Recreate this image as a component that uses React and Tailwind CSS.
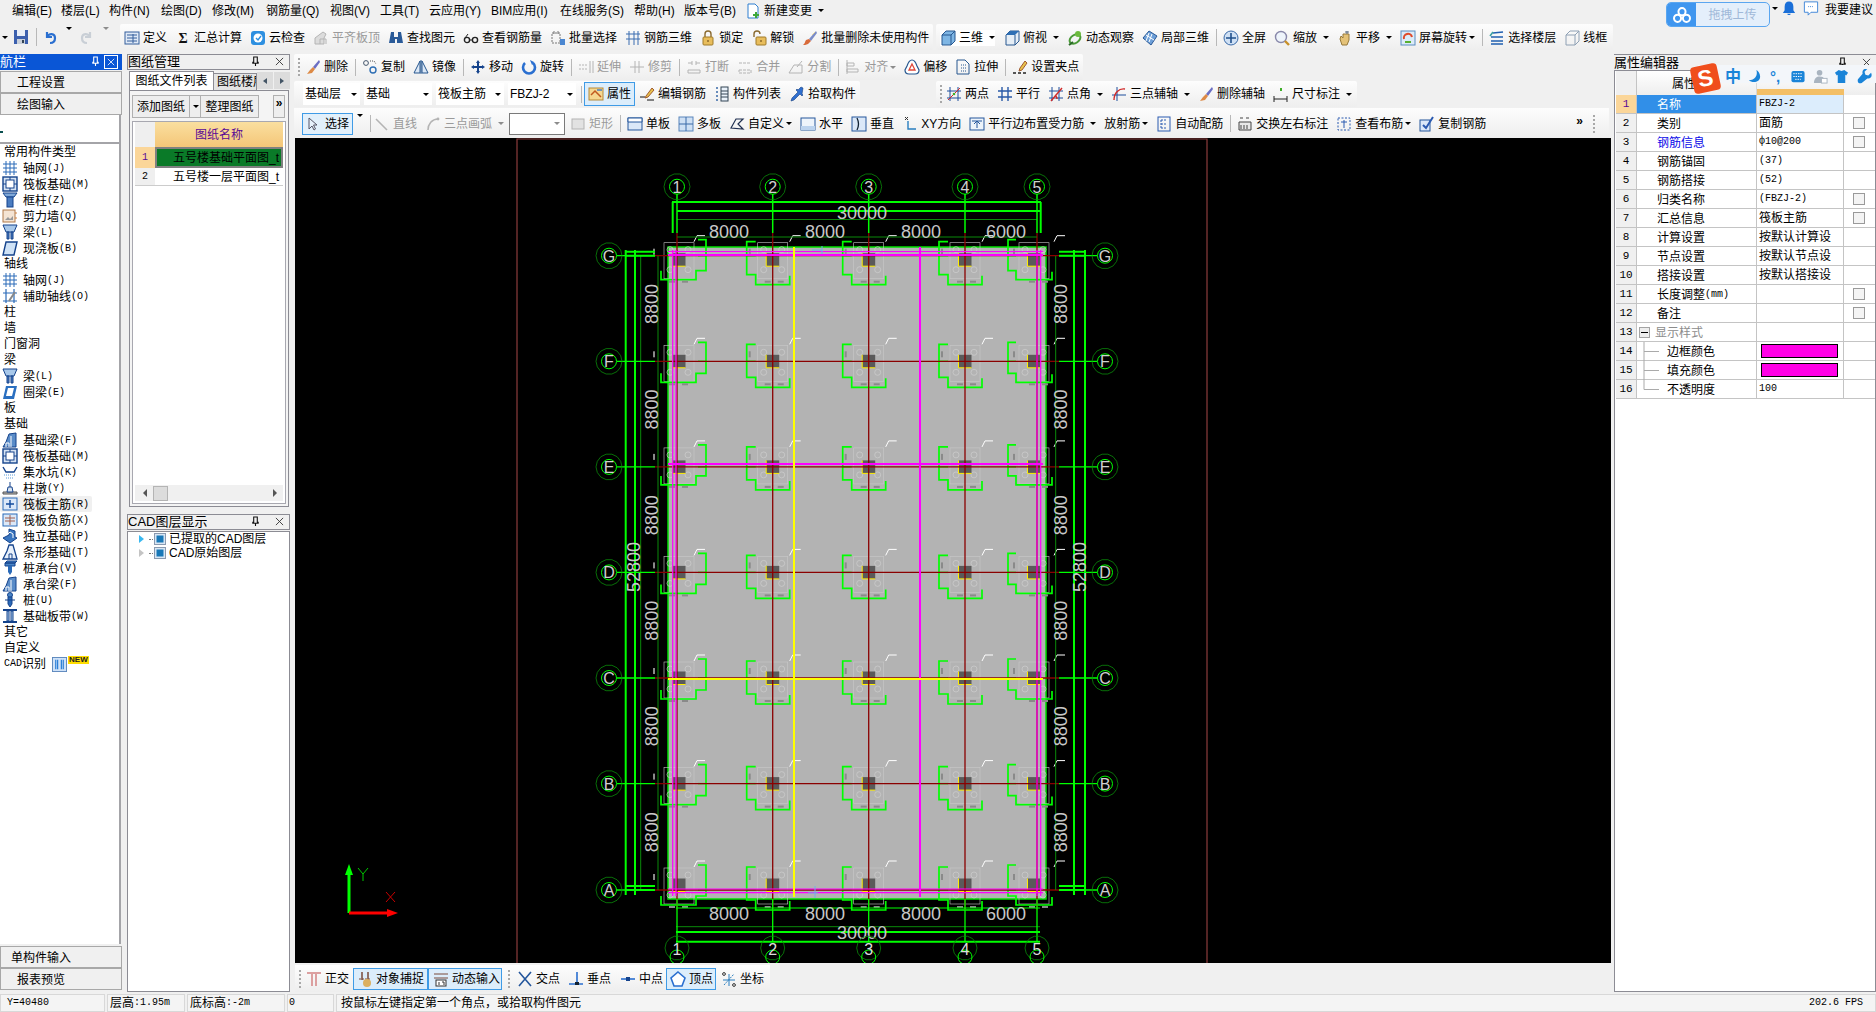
import React from 'react'

const S = ({ children }) => (
  <svg viewBox="0 0 16 16" width="16" height="16" fill="none" className="block shrink-0">{children}</svg>
)

const NAVY = '#15438c'
const GRAY = '#b4b4b4'

const Ic = {
  save: <S><path d="M1 1h14v14H1z" fill="#3b5fae" /><path d="M4 1h8v6H4z" fill="#e8eef8" /><path d="M4 10h8v5H4z" fill="#c9d0da" /><path d="M9 11h2v3H9z" fill="#345" /></S>,
  undo: <S><path d="M5 3v5h5M5 8c2-4 8-4 8 1 0 3-2 5-5 5" stroke="#2a6fd0" strokeWidth="2.2" /></S>,
  redo: <S><path d="M11 3v5H6M11 8C9 4 3 4 3 9c0 3 2 5 5 5" stroke="#c9cfd6" strokeWidth="2.2" /></S>,
  doc: <S><path d="M3 1h7l3 3v11H3z" fill="#fff" stroke="#2f7fd0" /><path d="M8 11h2V9h2v2h2v2h-2v2h-2v-2H8z" fill="#3fa83a" /></S>,
  define: <S><rect x="1" y="2" width="14" height="12" fill="#dfe9f6" stroke="#355f9c" /><path d="M3 5h10M3 8h10M3 11h10M9 4v9" stroke="#355f9c" /></S>,
  cloud: <S><rect x="1" y="1" width="14" height="14" rx="3" fill="#2d8fe0" /><circle cx="8" cy="8" r="4.5" fill="#fff" /><path d="M6 8l2 2 3-4" stroke="#2d8fe0" strokeWidth="1.4" /></S>,
  flat: <S><path d="M2 14V8l8-6 3 2-2 4v6z" fill="#dcdcdc" stroke={GRAY} /><path d="M7 14V9h6v5" stroke={GRAY} /></S>,
  binoc: <S><path d="M3 2h3v5h4V2h3l2 11H9V9H7v4H1z" fill="#2a5a98" /></S>,
  glasses: <S><circle cx="4" cy="10" r="2.6" stroke="#222" strokeWidth="1.4" /><circle cx="12" cy="10" r="2.6" stroke="#222" strokeWidth="1.4" /><path d="M6.5 10h3M2 8l3-4" stroke="#222" /></S>,
  batch: <S><path d="M2 3h8v10H2z" stroke="#777" strokeDasharray="2 1" /><path d="M10 9h5v6h-5z" fill="#4a86d0" /><path d="M4 1v3M8 1v3" stroke="#777" /></S>,
  rebar3: <S><path d="M1 4h14M1 9h14M4 1v14M9 1v14M13 1v14" stroke="#3a6cb0" /></S>,
  lock: <S><path d="M5 7V4a3 3 0 016 0v3" stroke="#8a6a30" strokeWidth="1.4" /><rect x="3" y="7" width="10" height="8" rx="1" fill="#e8bd5c" stroke="#a07a28" /><path d="M8 10v2" stroke="#604010" /></S>,
  unlock: <S><path d="M3 7V4a3 3 0 016 0" stroke="#8a6a30" strokeWidth="1.4" /><rect x="5" y="7" width="10" height="8" rx="1" fill="#e8bd5c" stroke="#a07a28" /><path d="M10 10v2" stroke="#604010" /></S>,
  brush: <S><path d="M14 1L7 9l2 2 6-8z" fill="#7a8cc8" /><path d="M7 9l2 2-3 3c-2 1-4 1-5 1 1-1 2-2 2-3l1-2z" fill="#d86a3a" /><path d="M10 5l3-3" stroke="#e8d9a0" /></S>,
  cube: <S><path d="M2 5l4-4h9v10l-4 4H2z" fill="#7fb6e4" stroke="#27578f" /><path d="M2 5h9v10M11 5l4-4" stroke="#27578f" /></S>,
  cubeTop: <S><path d="M2 5l4-4h9v10l-4 4H2z" fill="#e6eef6" stroke="#27578f" /><path d="M2 5l4-4h9l-4 4z" fill="#2f6fb4" /><path d="M11 5v10" stroke="#27578f" /></S>,
  orbit: <S><ellipse cx="8" cy="9" rx="6" ry="4" transform="rotate(-35 8 9)" stroke="#4a9a38" strokeWidth="2" /><circle cx="11" cy="4" r="3" fill="#6dbb3f" /><path d="M2 15l4-3" stroke="#2a6a28" strokeWidth="2" /></S>,
  local3d: <S><path d="M1 8l6-7 8 5-6 9z" fill="#6d9fd8" stroke="#2a5a98" /><path d="M4 5l8 5M7 3l-3 8M10 4l-3 8" stroke="#fff" /></S>,
  full: <S><circle cx="8" cy="8" r="7" fill="#cfe0f4" stroke="#3a6aa8" /><path d="M8 3v10M3 8h10" stroke="#20508c" strokeWidth="1.6" /></S>,
  zoom: <S><circle cx="7" cy="7" r="5.5" fill="#eef4fb" stroke="#88a" strokeWidth="1.4" /><path d="M11 11l4 4" stroke="#c89028" strokeWidth="2.4" /></S>,
  hand: <S><path d="M3 9l1-3 2 2V4h6v6l-2 5H5z" fill="#e4c278" stroke="#96793a" /><path d="M10 1v3M8 2h4" stroke="#5a6a80" /></S>,
  rotate: <S><rect x="1" y="1" width="14" height="14" fill="#dcebf8" stroke="#5a8cc0" /><path d="M4 9a4 4 0 018-2" stroke="#e04a2a" strokeWidth="2" /><path d="M5 12h6" stroke="#58b030" strokeWidth="2" /></S>,
  floors: <S><path d="M4 3l10-1M2 7h12M2 11h12M2 14h12" stroke="#1f5fb0" strokeWidth="1.6" /><path d="M1 6l3-4" stroke="#39a0a0" strokeWidth="1.6" /></S>,
  wire: <S><path d="M2 5l4-4h9v10l-4 4H2zM2 5h9v10M11 5l4-4" stroke="#8ea0b4" /></S>,
  del: <S><path d="M14 1L8 8l2 2 5-7z" fill="#6b6fc4" /><path d="M8 8l2 2-3 4-5 1c1-1 2-3 3-4z" fill="#dd8a46" /></S>,
  copy: <S><circle cx="4" cy="4" r="2.4" stroke="#44566c" /><circle cx="11" cy="11" r="3" stroke="#2f6fb4" strokeWidth="1.4" /><path d="M8 2h4l2 3" stroke="#555" strokeDasharray="1 1" /></S>,
  mirror: <S><path d="M7 2L1 14h6zM9 2l6 12H9z" fill="#dce8f6" stroke="#27578f" /><path d="M8 1v14" stroke="#27578f" /></S>,
  move: <S><path d="M8 1l2 3H9v3h3V6l3 2-3 2V9H9v3h1l-2 3-2-3h1V9H4v1L1 8l3-2v1h3V4H6z" fill={NAVY} /></S>,
  turn: <S><path d="M4 4a6 6 0 108 0" stroke="#2a6fd0" strokeWidth="2.6" /><path d="M9 1l4 2-2 3z" fill="#2a6fd0" /></S>,
  extend: <S><path d="M1 6h8M1 10h8" stroke={GRAY} strokeDasharray="2 1" /><path d="M12 2v12M15 2v12" stroke={GRAY} /></S>,
  trim: <S><path d="M1 8h14M6 2v12M10 2v12" stroke={GRAY} /></S>,
  brk: <S><path d="M2 4h4M10 4h4M2 11h12v3H2z" stroke={GRAY} /><path d="M6 2v4M10 2v4" stroke={GRAY} /></S>,
  merge: <S><path d="M2 4h12M2 11h12v3H2z" stroke={GRAY} strokeDasharray="3 1" /></S>,
  split: <S><path d="M1 14l5-8h8v8zM9 8l5-6" stroke={GRAY} /></S>,
  align: <S><path d="M2 1v14M2 4h7v3H2zM2 10h11v3H2z" stroke={GRAY} /></S>,
  offset: <S><path d="M8 1c3 0 4 3 5 6l2 4c0 3-2 4-4 4H5c-2 0-4-1-4-4l2-4c1-3 2-6 5-6z" fill="#fff" stroke="#27578f" strokeWidth="1.2" /><path d="M8 5l3 6H5z" fill="#fff" stroke="#e0483a" strokeWidth="1.3" /></S>,
  stretch: <S><path d="M2 1h8l4 4v10H2z" stroke="#27578f" /><path d="M6 6h5M6 9h5M6 12h5" stroke="#27578f" strokeDasharray="1 1" /></S>,
  grip: <S><path d="M1 14h3M6 14h3M11 14h3" stroke="#222" strokeWidth="1.4" /><path d="M8 9l5-7 2 2-5 7-3 1z" fill="#e8c24a" stroke="#a05a30" /></S>,
  prop: <S><rect x="1" y="2" width="14" height="12" fill="#f5d891" stroke="#b58a3a" /><path d="M3 9l4-4 6 6" stroke="#c05a20" strokeWidth="1.5" /><path d="M9 4h5" stroke="#4a7fc0" strokeWidth="1.5" /></S>,
  edit: <S><path d="M1 11h5M8 14h7" stroke="#111" /><path d="M7 10l6-8 2 2-6 7-3 1z" fill="#e8c24a" stroke="#a05a30" /></S>,
  list: <S><path d="M2 2h2M2 6h2M2 10h2M2 14h2" stroke="#3a6aa8" strokeWidth="1.6" /><rect x="7" y="1" width="7" height="14" fill="#eaf2fb" stroke="#345" /><path d="M7 5h7M7 8h7M7 11h7" stroke="#345" /></S>,
  pick: <S><path d="M14 2l-2-1-3 3-1-1-1 1 2 2-6 6-1 3 3-1 6-6 2 2 1-1-1-1z" fill="#2f6fd0" stroke="#153f80" strokeWidth=".6" /></S>,
  twoPts: <S><path d="M1 5h14M1 12h14M4 1v14M12 1v14" stroke="#1f4f9c" /><path d="M2 14L14 2" stroke="#d02a2a" /><circle cx="8" cy="8" r="1.3" fill="#3fae2a" /></S>,
  parallel: <S><path d="M1 5h14M1 11h14M5 1v14M11 1v14" stroke="#2a5aa8" strokeWidth="1.4" /></S>,
  angle: <S><path d="M1 5h14M1 12h14M4 1v14M11 1v14" stroke="#1f4f9c" /><path d="M3 15L14 2M9 13a6 6 0 00-2-4" stroke="#d02a2a" strokeWidth="1.4" /></S>,
  arc: <S><path d="M1 9h14M6 1v14" stroke="#1f4f9c" /><path d="M3 14C3 7 8 2 14 3" stroke="#d02a2a" strokeWidth="1.4" /></S>,
  dim: <S><rect x="7" y="2" width="2" height="3" fill="#3fae2a" /><path d="M1 13h13M1 10v6M14 10v6" stroke="#222" /></S>,
  arrow: <S><path d="M5 2v11l3-3 2 4 1.5-1-2-4h3.500z" fill="#e8f2fc" stroke="#556" /></S>,
  line: <S><path d="M2 3l11 11" stroke={GRAY} strokeWidth="1.6" /></S>,
  arc3: <S><path d="M3 14C3 8 7 3 13 3" stroke={GRAY} strokeWidth="1.6" /><circle cx="13" cy="3" r="1.4" fill={GRAY} /></S>,
  rect: <S><rect x="2" y="3" width="12" height="10" fill="#e2e2e2" stroke={GRAY} /></S>,
  single: <S><rect x="1" y="2" width="14" height="12" fill="#dbe8f8" stroke="#24569c" /><path d="M1 2h14v4H1z" fill="#fff" stroke="#24569c" /></S>,
  multi: <S><rect x="1" y="1" width="14" height="14" fill="#cfe0f4" stroke="#5a86bc" /><path d="M8 1v14M1 8h14" stroke="#3a6aa8" /></S>,
  custom: <S><path d="M2 12L7 3h7l-5 5 5 5z" stroke="#1f2f50" strokeWidth="1.2" /></S>,
  horiz: <S><rect x="1" y="2" width="14" height="12" fill="#eef4fb" stroke="#24569c" /><path d="M1 10h14v4H1z" fill="#bcd3ee" /></S>,
  vert: <S><rect x="1" y="1" width="14" height="14" fill="#dbe8f8" stroke="#24569c" /><path d="M6 2c2 4 2 8 0 12" stroke="#123" strokeWidth="1.3" /></S>,
  xy: <S><path d="M6 5v8h8" stroke="#2a7fc0" strokeWidth="1.4" /><path d="M3 1l3 3M6 1L3 4" stroke="#333" /></S>,
  para: <S><rect x="1" y="2" width="14" height="12" fill="#eef4fb" stroke="#24569c" /><path d="M8 12V6M5 8l3-3 3 3M3 5h10" stroke="#24569c" /></S>,
  auto: <S><rect x="2" y="1" width="12" height="14" stroke="#2a5ab0" /><path d="M5 4v8M5 4h5M5 8h5M5 12h5" stroke="#2a5ab0" strokeDasharray="2 1" /></S>,
  swap: <S><path d="M2 6h12v8H2z" fill="#e8e8e8" stroke="#444" /><path d="M3 2h3M9 2h3M4 9v4M7 9v4M10 9v4" stroke="#444" /></S>,
  view: <S><path d="M2 2h12v12H2z" stroke="#2a5ab0" strokeDasharray="2 1.500" /><path d="M8 4v8M5 6h6" stroke="#2a5ab0" /></S>,
  rcopy: <S><rect x="1" y="4" width="10" height="11" fill="#dbe8f8" stroke="#24569c" /><path d="M4 9l3 3 7-11" stroke="#2a5ab0" strokeWidth="2" /></S>,
  ortho: <S><path d="M1 2h14M6 2v13M10 2v13" stroke="#dca0a0" strokeWidth="2" /></S>,
  snap: <S><path d="M5 1v8M11 1v8" stroke="#7a4a3a" strokeWidth="1.5" /><path d="M2 8h12" stroke="#7a4a3a" strokeDasharray="2 1" /><circle cx="10" cy="12" r="4" fill="#dcb060" /></S>,
  dyn: <S><path d="M1 3h14M1 7h14" stroke="#7a4a3a" /><rect x="3" y="9" width="10" height="6" fill="#fff" stroke="#333" /><path d="M6 11v3M9 11h2v3" stroke="#333" /></S>,
  cross: <S><path d="M2 1l12 14M14 1L2 15" stroke="#24569c" strokeWidth="1.6" /></S>,
  perp: <S><path d="M1 13h14M9 1v12" stroke="#2a6fd0" strokeWidth="1.6" /><rect x="7" y="11" width="4" height="3" fill="#123" /></S>,
  mid: <S><path d="M1 8h14" stroke="#2a6fd0" strokeWidth="1.6" /><rect x="6" y="6" width="4" height="4" fill="#15438c" /></S>,
  vertex: <S><path d="M8 1l7 6-3 8H4L1 7z" fill="#fff" stroke="#2a6fd0" strokeWidth="1.6" /></S>,
  coord: <S><path d="M8 3v12M2 9h12" stroke="#2a7fc0" /><path d="M3 14L13 3" stroke="#2a7fc0" strokeDasharray="2 1" /><circle cx="3" cy="3" r="1.400" stroke="#333" /><circle cx="13" cy="14" r="1.400" stroke="#333" /></S>,
  axis: <S><path d="M1 4h14M1 8h14M1 12h14M4 1v14M8 1v14M12 1v14" stroke="#2a6ab8" /></S>,
  raft: <S><rect x="1" y="1" width="14" height="14" fill="#d7e4f4" stroke={NAVY} strokeWidth="1.4" /><rect x="4" y="4" width="8" height="8" fill="#fff" stroke={NAVY} /><path d="M1 8h3M12 8h3M8 1v3M8 12v3" stroke={NAVY} /></S>,
  col: <S><path d="M1 1h14l-3 4H4z" fill="#7fa8d8" stroke={NAVY} /><rect x="5" y="5" width="6" height="10" fill="#4a7cc0" stroke={NAVY} /></S>,
  wall: <S><rect x="1" y="2" width="12" height="12" fill="#f4e4d4" stroke="#b07a4a" /><path d="M3 12l3-3 2 2 3-3v4z" fill="#999" /><path d="M13 5h2M13 10h2" stroke="#d08040" /></S>,
  beam: <S><path d="M1 1h14l-3 7H4z" fill="#a8c8ea" stroke={NAVY} /><path d="M5 8h2v7H5zM9 8h2v7H9z" fill="#4a7cc0" stroke={NAVY} /></S>,
  slab: <S><path d="M4 2h11l-3 13H1z" fill="#cfe2f6" stroke={NAVY} strokeWidth="1.4" /></S>,
  auxAxis: <S><path d="M1 5h14M1 13h14M4 1v14M12 1v14" stroke="#2a6ab8" strokeWidth="1.2" /><path d="M7 13l6-9" stroke="#888" strokeWidth="2" /></S>,
  ring: <S><path d="M4 2h11l-3 13H1z" fill="#2a6fc0" /><path d="M6 4h6l-2 8H4z" fill="#fff" /></S>,
  found: <S><path d="M1 15l3-5 3-8 7-1v14z" fill="#5a8cc8" stroke={NAVY} /><path d="M4 15v-4h3v4M9 15V4" stroke="#fff" /></S>,
  pit: <S><path d="M1 3l3 5h8l3-5" stroke={NAVY} strokeWidth="1.4" /><path d="M2 11h12M4 14h8" stroke="#5a9ad8" strokeDasharray="1 1" /></S>,
  pier: <S><path d="M1 12h14v2H1z" fill="#bbb" stroke="#555" /><path d="M5 12l1-5h4l1 5z" fill="#d8e4f0" stroke={NAVY} /><path d="M8 2v5" stroke={NAVY} /></S>,
  bar: <S><rect x="1" y="2" width="14" height="12" fill="#dbe8f8" stroke="#2a6ab8" /><path d="M8 4v8M4 8h8" stroke="#124a9c" strokeWidth="1.4" /></S>,
  barNeg: <S><rect x="1" y="2" width="14" height="12" fill="#dbe8f8" stroke="#2a6ab8" /><path d="M3 6h10M3 9h10M8 3v10" stroke="#a06050" /></S>,
  single3d: <S><path d="M1 10l6-3V1l6 2v6l2 1-7 5z" fill="#3a76c0" stroke={NAVY} /><path d="M5 7l3-3 3 2v4" stroke="#fff" /></S>,
  strip: <S><path d="M1 15l4-8 2-6h4l4 14z" fill="#e8f0fa" stroke={NAVY} strokeWidth="1.3" /><path d="M7 15v-5h3v5" stroke={NAVY} /></S>,
  cap: <S><path d="M3 3l2-2h10l-2 2zM3 3h10v3H3z" fill="#4a86c8" stroke={NAVY} /><path d="M6 6h4v6l-2 3-2-3z" fill="#2a6ab8" /></S>,
  pile: <S><circle cx="8" cy="3" r="2.500" fill="#4a86c8" stroke={NAVY} /><path d="M6 5h4v7l-2 3-2-3z" fill="#2a6ab8" stroke={NAVY} /><path d="M3 8h10" stroke={NAVY} /></S>,
  band: <S><path d="M1 2h14M1 14h14" stroke={NAVY} strokeWidth="1.8" /><path d="M5 3h2v10H5zM9 3h2v10H9z" fill="#a8c8ea" stroke={NAVY} /></S>,
}

const Caret = ({ tight, dim }) => (
  <span className={`${tight ? 'ml-[2px]' : 'ml-[6px]'} w-0 h-0 border-x-[3px] border-t-[3px] border-x-transparent ${dim ? 'border-t-[#8c8c8c]' : 'border-t-black'}`} />
)

function Tool({ icon, label, gray, caret, tight, className = '' }) {
  return (
    <div className={`flex items-center shrink-0 ${gray ? 'text-[#9a9a9a]' : ''} ${className}`}>
      {icon}
      <span className="ml-[3px] whitespace-nowrap leading-none">{label}</span>
      {caret && <Caret tight={tight} dim={gray} />}
    </div>
  )
}

const Sep = () => <div className="w-px h-[17px] bg-[#b8b8b8] mx-[-1.5px] shrink-0" />
const Grip = ({ className = '' }) => (
  <div className={`flex flex-col gap-[2px] shrink-0 ${className}`}>
    {[0, 1, 2, 3, 4].map((i) => <span key={i} className="w-[2px] h-[2px] bg-[#a8a8a8]" />)}
  </div>
)
const Seg = ({ children, className = '', gap = 'gap-[8px]' }) => (
  <div className={`flex items-center ${gap} bg-linear-to-b from-[#fdfdfd] to-[#eeeeee] rounded-[2px] ${className}`}>{children}</div>
)

const menus = [
  ['编辑(E)', 'w-[49px]'], ['楼层(L)', 'w-[48px]'], ['构件(N)', 'w-[52px]'], ['绘图(D)', 'w-[51px]'],
  ['修改(M)', 'w-[54px]'], ['钢筋量(Q)', 'w-[64px]'], ['视图(V)', 'w-[50px]'], ['工具(T)', 'w-[49px]'],
  ['云应用(Y)', 'w-[62px]'], ['BIM应用(I)', 'w-[69px]'], ['在线服务(S)', 'w-[74px]'], ['帮助(H)', 'w-[50px]'], ['版本号(B)', 'w-[61px]'],
]

function MenuBar() {
  return (
    <div className="h-[24px] flex items-center pl-[12px] pb-[3px] shrink-0 bg-[#f0f0f0]">
      {menus.map(([t, w]) => <span key={t} className={`${w} shrink-0 whitespace-nowrap`}>{t}</span>)}
      <Tool icon={Ic.doc} label="新建变更" caret />
    </div>
  )
}

function ToolRow1() {
  return (
    <div className="h-[26px] flex shrink-0">
      <div className="w-[120px] flex items-center shrink-0">
        <Caret tight /><span className="ml-[5px]">{Ic.save}</span>
        <span className="ml-[7px] w-px h-[18px] bg-[#b8b8b8]" />
        <span className="ml-[5px]">{Ic.undo}</span><span className="ml-[6px]"><Caret tight /></span>
        <span className="ml-[7px]">{Ic.redo}</span><span className="ml-[6px]"><Caret tight dim /></span>
      </div>
      <Seg className="h-full pt-[1px] pl-[4px] pr-[4px] w-[813px] shrink-0">
        <Tool icon={Ic.define} label="定义" />
        <Tool icon={<S><text x="8" y="13" textAnchor="middle" fontSize="14" fontWeight="700" fill="#111" fontFamily="Liberation Serif">Σ</text></S>} label="汇总计算" />
        <Tool icon={Ic.cloud} label="云检查" />
        <Tool icon={Ic.flat} label="平齐板顶" gray />
        <Tool icon={Ic.binoc} label="查找图元" />
        <Tool icon={Ic.glasses} label="查看钢筋量" />
        <Tool icon={Ic.batch} label="批量选择" />
        <Tool icon={Ic.rebar3} label="钢筋三维" />
        <Tool icon={Ic.lock} label="锁定" />
        <Tool icon={Ic.unlock} label="解锁" />
        <Tool icon={Ic.brush} label="批量删除未使用构件" />
      </Seg>
      <Seg className="h-full pt-[1px] ml-[3px] pl-[4px] w-[677px] shrink-0">
        <Tool icon={Ic.cube} label="三维" caret className="bg-white" />
        <Tool icon={Ic.cubeTop} label="俯视" caret className="ml-[1px]" />
        <Tool icon={Ic.orbit} label="动态观察" />
        <Tool icon={Ic.local3d} label="局部三维" />
        <Sep />
        <Tool icon={Ic.full} label="全屏" />
        <Tool icon={Ic.zoom} label="缩放" caret />
        <Tool icon={Ic.hand} label="平移" caret />
        <Tool icon={Ic.rotate} label="屏幕旋转" caret tight />
        <Sep />
        <Tool icon={Ic.floors} label="选择楼层" />
        <Tool icon={Ic.wire} label="线框" />
      </Seg>
    </div>
  )
}

function ToolRow2() {
  return (
    <div className="h-[26px] flex shrink-0">
      <Seg className="h-full pl-[4px] pr-[4px]">
        <Grip className="mr-[-3px]" />
        <Tool icon={Ic.del} label="删除" />
        <Sep />
        <Tool icon={Ic.copy} label="复制" />
        <Tool icon={Ic.mirror} label="镜像" />
        <Sep />
        <Tool icon={Ic.move} label="移动" />
        <Tool icon={Ic.turn} label="旋转" />
        <Sep />
        <Tool icon={Ic.extend} label="延伸" gray />
        <Tool icon={Ic.trim} label="修剪" gray />
        <Sep />
        <Tool icon={Ic.brk} label="打断" gray />
        <Tool icon={Ic.merge} label="合并" gray />
        <Tool icon={Ic.split} label="分割" gray />
        <Sep />
        <Tool icon={Ic.align} label="对齐" gray caret tight />
        <Tool icon={Ic.offset} label="偏移" />
        <Tool icon={Ic.stretch} label="拉伸" />
        <Sep />
        <Tool icon={Ic.grip} label="设置夹点" />
      </Seg>
    </div>
  )
}

const Combo = ({ label, w }) => (
  <div className={`${w} h-[22px] bg-white flex items-center justify-between pl-[2px] pr-[3px] shrink-0`}>
    <span className="whitespace-nowrap">{label}</span><Caret tight />
  </div>
)

function ToolRow3() {
  return (
    <div className="h-[28px] flex items-center shrink-0">
      <Seg gap="gap-[4px]" className="h-[26px] pl-[9px] pr-[4px] w-[566px] shrink-0">
        <Combo label="基础层" w="w-[57px]" />
        <Combo label="基础" w="w-[68px]" />
        <Combo label="筏板主筋" w="w-[68px]" />
        <Combo label="FBZJ-2" w="w-[68px]" />
        <div className="w-px h-[17px] bg-[#b8b8b8] shrink-0 ml-[1px]" />
        <div className="flex items-center h-[24px] w-[51px] ml-[-2px] pl-[3px] border border-[#3f9be6] bg-[#dcedfb] shrink-0">
          {Ic.prop}<span className="ml-[3px] leading-none">属性</span>
        </div>
        <Tool icon={Ic.edit} label="编辑钢筋" />
        <Tool icon={Ic.list} label="构件列表" className="ml-[4px]" />
        <Tool icon={Ic.pick} label="拾取构件" className="ml-[4px]" />
      </Seg>
      <Seg className="h-[26px] ml-[76px] pl-[4px] w-[421px] shrink-0">
        <Grip className="mr-[-4px]" />
        <Tool icon={Ic.twoPts} label="两点" />
        <Tool icon={Ic.parallel} label="平行" />
        <Tool icon={Ic.angle} label="点角" caret />
        <Tool icon={Ic.arc} label="三点辅轴" caret />
        <Tool icon={Ic.del} label="删除辅轴" />
        <Tool icon={Ic.dim} label="尺寸标注" caret />
      </Seg>
    </div>
  )
}

function ToolRow4() {
  return (
    <div className="h-[30px] flex items-center shrink-0 w-[1315px] bg-linear-to-b from-[#fdfdfd] to-[#eeeeee] pl-[8px] pt-[1px] gap-[8px]">
      <div className="flex items-center h-[22px] w-[51px] pl-[1px] border border-[#3f9be6] bg-[#e2f0fb] shrink-0">
        {Ic.arrow}<span className="ml-[5px] leading-none">选择</span>
      </div>
      <span className="ml-[-6px]"><Caret tight /></span>
      <Sep />
      <Tool icon={Ic.line} label="直线" gray className="ml-[-3px]" />
      <Tool icon={Ic.arc3} label="三点画弧" gray caret />
      <div className="w-[56px] h-[22px] ml-[-3px] border border-[#7a7a7a] bg-white flex items-center justify-end pr-[4px] shrink-0"><Caret tight dim /></div>
      <Tool icon={Ic.rect} label="矩形" gray className="ml-[-3px]" />
      <Sep />
      <Tool icon={Ic.single} label="单板" />
      <Tool icon={Ic.multi} label="多板" />
      <Tool icon={Ic.custom} label="自定义" caret tight />
      <Tool icon={Ic.horiz} label="水平" />
      <Tool icon={Ic.vert} label="垂直" />
      <Tool icon={Ic.xy} label="XY方向" />
      <Tool icon={Ic.para} label="平行边布置受力筋" caret />
      <div className="flex items-center shrink-0 leading-none">放射筋<Caret tight /></div>
      <Tool icon={Ic.auto} label="自动配筋" />
      <Sep />
      <Tool icon={Ic.swap} label="交换左右标注" />
      <Tool icon={Ic.view} label="查看布筋" caret tight />
      <Tool icon={Ic.rcopy} label="复制钢筋" />
      <span className="ml-auto text-[12px] font-bold leading-none mb-[6px]">»</span>
      <Grip className="ml-[2px] mr-[14px]" />
    </div>
  )
}

const X = [677, 772.7, 868.7, 965, 1037]
const Y = [255.7, 361.3, 466.9, 572.4, 678, 783.6, 890]
const LETTERS = ['G', 'F', 'E', 'D', 'C', 'B', 'A']
const ROW_DY = [3, 0, -3, 0, 0, 0, -6]
const SHAPE = [
  [[21, -19], [29, -19], [29, 12], [19, 12], [19, 21], [-16, 21], [-16, 12]],
  [[-17, -17], [-26, -17], [-26, 16], [-17, 16], [-17, 26], [17, 26], [17, 17]],
  [[-17, -17], [-26, -17], [-26, 16], [-17, 16], [-17, 26], [17, 26], [17, 17]],
  [[-17, -17], [-26, -17], [-26, 16], [-17, 16], [-17, 26], [17, 26], [17, 17]],
  [[-21, -19], [-29, -19], [-29, 12], [-21, 12], [-21, 21], [15, 21], [15, 13]],
]
const COL_DX = [2, 0, 0, 0, -3]
const GREEN = '#00ff00'
const DARKG = '#0a8a0a'

const gon = (cx, cy, r) => Array.from({ length: 14 }, (_, i) => {
  const a = (i / 14) * Math.PI * 2
  return `${(cx + r * Math.cos(a)).toFixed(1)},${(cy + r * Math.sin(a)).toFixed(1)}`
}).join(' ')

function Bubble({ x, y, t }) {
  return (
    <g>
      <polygon points={gon(x, y, 13)} stroke={DARKG} strokeWidth=".8" fill="none" />
      <circle cx={x} cy={y} r="7.500" stroke={GREEN} fill="none" />
      <text x={x} y={y + 6} textAnchor="middle" fontSize="16" fill="#d0d0d0" fontFamily="Liberation Sans">{t}</text>
    </g>
  )
}

function Footing({ cx, cy, col, row }) {
  const dy = ROW_DY[row]
  const dx = COL_DX[col]
  const colDy = row === 0 ? 4 : row === 6 ? -5 : 0
  const pts = SHAPE[col].map(([a, b]) => `${cx + a},${cy + b + dy}`).join(' ')
  const inner = [[-9, -9], [9, -9], [-9, 11], [9, 11]]
  return (
    <g>
      {inner.map(([a, b], i) => <circle key={i} cx={cx + a + dx} cy={cy + b + dy} r="3" stroke="#cfcfcf" strokeWidth=".7" fill="none" />)}
      <rect x={cx - 15 + dx} y={cy - 16 + dy} width="30" height="36" stroke="#c8c8c8" strokeWidth=".6" fill="none" />
      <polyline points={pts} stroke={GREEN} strokeWidth="1.7" fill="none" />
      <line x1={cx + SHAPE[col][1][0]} x2={cx + SHAPE[col][0][0]} y1={cy} y2={cy} stroke={GREEN} strokeWidth="1.400" />
      <polyline points={`${cx + 17},${cy - 17 + dy} ${cx + 20},${cy - 23 + dy} ${cx + 28},${cy - 23 + dy}`} stroke="#ffffff" strokeWidth="1" fill="none" />
      <rect x={cx - 8} y={cy + 22 + dy} width="6" height="2" fill="#8a8a8a" />
      <rect x={cx + 5} y={cy + 22 + dy} width="6" height="2" fill="#8a8a8a" />
      <rect x={cx - 24} y={cy - 10 + dy} width="2" height="6" fill="#8a8a8a" />
      <rect x={cx - 6.500 + dx} y={cy - 6.500 + colDy} width="13" height="13" fill="#5a5a5a" />
      <polyline points={`${cx - 6.500 + dx},${cy - 6.500 + colDy} ${cx - 6.500 + dx},${cy + 6.500 + colDy} ${cx + 6.500 + dx},${cy + 6.500 + colDy}`} stroke="#ffee00" strokeWidth="1" fill="none" />
    </g>
  )
}

function Drawing() {
  const cols = [[729, '8000'], [825, '8000'], [921, '8000'], [1006, '6000']]
  const spans = Y.slice(0, 6).map((y, i) => (y + Y[i + 1]) / 2 - 4.5)
  return (
    <svg width="1316" height="825" viewBox="295 138 1316 825" className="block bg-black" fontFamily="Liberation Sans">
      <path d="M517 963V139H1207V963" stroke="#8c3c3c" strokeWidth="1.200" fill="none" />

      <rect x="668" y="247" width="378" height="652" fill="#b3b3b3" stroke="#00e000" strokeWidth="1.500" />
      {Y.map((y, r) => X.map((x, c) => <Footing key={`${r}-${c}`} cx={x} cy={y} col={c} row={r} />))}

      {X.map((x) => <line key={x} x1={x} x2={x} y1="233" y2="910" stroke="#8a0000" strokeWidth="1.300" />)}
      {Y.map((y) => <line key={y} x1="655" x2="1059" y1={y} y2={y} stroke="#8a0000" strokeWidth="1.300" />)}

      <path d="M672.700 250V896M676 250V896M1037 250V896M1040.700 250V896M668 251.500H1043M668 889H1043M668 892.700H1043" stroke="#ff00ff" strokeWidth="1.200" />
      <path d="M668 255H1043M668 464H1043" stroke="#ff00ff" strokeWidth="2" />
      <path d="M920 247V897" stroke="#ff00ff" strokeWidth="2" />
      <path d="M794 247V897M668 679H1043" stroke="#ffff00" strokeWidth="2" />
      <path d="M812 250h10M822 246v8M808 893h10M815 886v12" stroke="#6fb0e8" />

      {/* top dimensions */}
      <path d="M672 202H1041M677 211H1041" stroke={GREEN} strokeWidth="2" />
      <path d="M677 219.500H1037M677 237H1037" stroke={DARKG} />
      <path d="M672.700 202V233M1040.700 202V233" stroke={GREEN} strokeWidth="2" />
      {X.map((x) => <line key={x} x1={x} x2={x} y1="194" y2="233" stroke={GREEN} strokeWidth="1.500" />)}
      {X.map((x, i) => <Bubble key={x} x={x} y={186.7} t={i + 1} />)}
      <text x="862" y="219" textAnchor="middle" fontSize="18" fill="#c8c8c8">30000</text>
      {cols.map(([x, t]) => <text key={x} x={x} y="238" textAnchor="middle" fontSize="18" fill="#c8c8c8">{t}</text>)}

      {/* bottom dimensions */}
      <path d="M676 932H1040M676 941.700H1040" stroke={GREEN} strokeWidth="2" />
      <path d="M676 908H1040" stroke={GREEN} />
      <path d="M676 926.700H1040" stroke={DARKG} />
      {X.map((x) => <line key={x} x1={x} x2={x} y1="899" y2="941" stroke={GREEN} strokeWidth="1.300" />)}
      {cols.map(([x, t]) => <text key={x} x={x} y="920" textAnchor="middle" fontSize="18" fill="#c8c8c8">{t}</text>)}
      <text x="862" y="939" textAnchor="middle" fontSize="18" fill="#c8c8c8">30000</text>
      {X.map((x, i) => (
        <g key={x}>
          <polygon points={gon(x, 948, 12)} stroke={DARKG} strokeWidth=".8" fill="none" />
          <circle cx={x} cy="957" r="7" stroke={GREEN} fill="none" />
          <text x={x} y="955" textAnchor="middle" fontSize="16" fill="#dddddd">{i + 1}</text>
        </g>
      ))}

      {/* side dimensions */}
      <path d="M625.700 250V895M635 250V895M1074 250V895M1085 250V895" stroke={GREEN} strokeWidth="2" />
      <path d="M640.700 256V890M658 256V890M1055.700 256V890" stroke={DARKG} />
      <path d="M625 251.700H655M625 255.700H655M1059 251.700H1085M1059 255.700H1085M625 886H655M625 890H655M1059 886H1085M1059 890H1085" stroke={GREEN} strokeWidth="2" />
      {Y.map((y, i) => (
        <g key={y}>
          <line x1="617" x2="655" y1={y} y2={y} stroke={GREEN} strokeWidth="1.300" />
          <line x1="1059" x2="1097" y1={y} y2={y} stroke={GREEN} strokeWidth="1.300" />
          <Bubble x={609} y={y} t={LETTERS[i]} />
          <Bubble x={1105} y={y} t={LETTERS[i]} />
        </g>
      ))}
      {spans.map((y) => (
        <g key={y} fontSize="18" fill="#c8c8c8" textAnchor="middle">
          <text transform={`translate(658 ${y}) rotate(-90)`}>8800</text>
          <text transform={`translate(1067 ${y}) rotate(-90)`}>8800</text>
        </g>
      ))}
      <g fontSize="18" fill="#c8c8c8" textAnchor="middle">
        <text transform="translate(640 567) rotate(-90)">52800</text>
        <text transform="translate(1086 567) rotate(-90)">52800</text>
      </g>

      {/* ucs */}
      <path d="M349 913V872" stroke="#00ff00" strokeWidth="3" />
      <path d="M349 864l-4 11h8z" fill="#00ff00" />
      <path d="M349 913H388" stroke="#ff0000" strokeWidth="3" />
      <path d="M398 913l-11-4v8z" fill="#ff0000" />
      <path d="M358 868l5 6 5-6M363 874v7" stroke="#00c800" fill="none" />
      <path d="M386 892l9 10M395 892l-9 10" stroke="#c80000" fill="none" />
    </svg>
  )
}

const navItems = [
  ['h', '常用构件类型'], ['axis', '轴网', '(J)'], ['raft', '筏板基础', '(M)'], ['col', '框柱', '(Z)'], ['wall', '剪力墙', '(Q)'],
  ['beam', '梁', '(L)'], ['slab', '现浇板', '(B)'], ['h', '轴线'], ['axis', '轴网', '(J)'], ['auxAxis', '辅助轴线', '(O)'],
  ['h', '柱'], ['h', '墙'], ['h', '门窗洞'], ['h', '梁'], ['beam', '梁', '(L)'], ['ring', '圈梁', '(E)'], ['h', '板'], ['h', '基础'],
  ['found', '基础梁', '(F)'], ['raft', '筏板基础', '(M)'], ['pit', '集水坑', '(K)'], ['pier', '柱墩', '(Y)'], ['bar', '筏板主筋', '(R)'],
  ['barNeg', '筏板负筋', '(X)'], ['single3d', '独立基础', '(P)'], ['strip', '条形基础', '(T)'], ['cap', '桩承台', '(V)'],
  ['found', '承台梁', '(F)'], ['pile', '桩', '(U)'], ['band', '基础板带', '(W)'], ['h', '其它'], ['h', '自定义'],
]

const Mono = ({ children, className = '' }) => (
  <span className={`font-['Liberation_Mono','Noto_Sans_CJK_SC',monospace] text-[10px] ${className}`}>{children}</span>
)

const PanelBtn = ({ children, className = '' }) => (
  <div className={`h-[22px] pt-[2px] flex items-center bg-[#f0f0f0] border border-[#a8a8a8] shrink-0 ${className}`}>{children}</div>
)

const Pin = () => (
  <svg viewBox="0 0 10 12" width="9" height="11" className="block shrink-0"><path d="M3 1h4v6h1v1H2V7h1zM5 8v3" stroke="#111" strokeWidth="1.200" fill="none" /></svg>
)
const Cross = () => (
  <svg viewBox="0 0 10 10" width="9" height="9" className="block shrink-0"><path d="M1 1l8 8M9 1L1 9" stroke="#333" /></svg>
)

function Nav() {
  return (
    <div className="w-[122px] shrink-0 flex flex-col pb-[4px]">
      <div className="h-[16px] bg-[#0a56d6] text-white flex items-center leading-none shrink-0 text-[13px] relative pb-[1px]">
        <span>航栏</span>
        <span className="ml-auto mr-[22px]"><svg viewBox="0 0 10 12" width="9" height="11" className="block"><path d="M3 1h4v6h1v1H2V7h1zM5 8v3" stroke="#fff" strokeWidth="1.200" fill="none" /></svg></span>
        <span className="absolute right-[4px] top-[1px] w-[14px] h-[14px] border border-white flex items-center justify-center"><svg viewBox="0 0 10 10" width="8" height="8" className="block"><path d="M1 1l8 8M9 1L1 9" stroke="#fff" /></svg></span>
      </div>
      <PanelBtn className="pl-[16px] mt-[1px]">工程设置</PanelBtn>
      <PanelBtn className="pl-[16px]">绘图输入</PanelBtn>
      <div className="flex-1 bg-white border-r-2 border-[#a4a4a8] flex flex-col min-h-0 mr-[1px]">
        <div className="h-[29px] border-b-2 border-[#a4a4a8] shrink-0 relative">
          <span className="block w-[3px] h-[2px] bg-[#0a5050] mt-[16px]" />
        </div>
        {navItems.map(([ic, t, k], i) => (
          ic === 'h' ? (
            <div key={i} className="h-[16px] pl-[4px] flex items-center leading-none shrink-0">{t}</div>
          ) : (
            <div key={i} className={`h-[16px] pl-[2px] flex items-center leading-none shrink-0 ${t === '筏板主筋' ? 'bg-[#f0f0f0] rounded-[2px] w-[92px]' : ''}`}>
              {Ic[ic]}
              <span className="ml-[5px] mt-[1px] whitespace-nowrap">{t}</span>
              <Mono className="mt-[1px]">{k}</Mono>
            </div>
          )
        ))}
        <div className="h-[16px] pl-[4px] flex items-center leading-none shrink-0">
          <Mono>CAD</Mono>识别
          <svg viewBox="0 0 16 16" width="15" height="15" className="block ml-[6px]"><rect x=".5" y=".5" width="15" height="15" fill="#cfe2f8" stroke="#5a86bc" /><path d="M4 3v10M6 3v10M10 3v10M12 3v10" stroke="#2a7fd8" strokeWidth="1.300" /></svg>
          <span className="ml-[1px] mb-[8px] px-[1px] bg-[#ffdd00] text-[8px] font-bold leading-[8px] text-[#222]">NEW</span>
        </div>
        <div className="flex-1" />
      </div>
      <PanelBtn className="pl-[10px] mt-[2px]">单构件输入</PanelBtn>
      <PanelBtn className="pl-[16px]">报表预览</PanelBtn>
    </div>
  )
}

const PanelTitle = ({ children, className = '' }) => (
  <div className={`h-[16px] border border-[#8c8c94] flex items-center leading-none text-[13px] bg-[#f0f0f0] shrink-0 pb-[1px] ${className}`}>
    <span className="whitespace-nowrap overflow-hidden">{children}</span>
    <span className="ml-auto mr-[15px]"><Pin /></span>
    <span className="mr-[5px]"><Cross /></span>
  </div>
)

function DrawingPanel() {
  return (
    <div className="w-[163px] ml-[5px] shrink-0 flex flex-col">
      <PanelTitle>图纸管理</PanelTitle>
      <div className="flex mt-[1px] ml-[2px] h-[19px] shrink-0">
        <div className="w-[85px] h-[19px] bg-white border border-b-0 border-[#8c8c94] flex items-center justify-center whitespace-nowrap">图纸文件列表</div>
        <div className="w-[43px] h-[17px] mt-[2px] bg-[#e4e4e4] border-t border-r border-[#8c8c94] pl-[3px] flex items-center overflow-hidden whitespace-nowrap">图纸楼层</div>
        <div className="w-[16px] h-[17px] mt-[1px] bg-[#dcdcdc] flex items-center justify-center"><span className="w-0 h-0 border-y-[3px] border-r-[4px] border-y-transparent border-r-[#456]" /></div>
        <div className="w-[16px] h-[17px] mt-[1px] ml-px bg-[#dcdcdc] flex items-center justify-center"><span className="w-0 h-0 border-y-[3px] border-l-[4px] border-y-transparent border-l-[#456]" /></div>
      </div>
      <div className="ml-[2px] w-[160px] h-[417px] bg-[#f4f4f4] border border-[#8c8c94] p-[2px] flex flex-col shrink-0">
        <div className="flex h-[23px] shrink-0 mt-[2px]">
          <div className="w-[58px] border border-[#b0b0b0] bg-[#eeeeee] flex items-center justify-center">添加图纸</div>
          <div className="w-[11px] border-y border-r border-[#b0b0b0] bg-[#eeeeee] flex items-center justify-center"><Caret tight /></div>
          <div className="w-[58px] border-y border-r border-[#b0b0b0] bg-[#eeeeee] flex items-center justify-center">整理图纸</div>
          <div className="w-[12px] ml-[14px] border border-[#b0b0b0] bg-[#eeeeee] flex justify-center font-bold leading-[14px]">»</div>
        </div>
        <div className="flex-1 mt-[3px] bg-white border border-[#a8a8b0] flex flex-col min-h-0 px-[2px]">
          <div className="flex h-[25px] shrink-0">
            <div className="w-[20px] bg-[#efefef]" />
            <div className="flex-1 bg-linear-to-b from-[#fadf9f] to-[#f4c678] text-[#5a0a96] flex items-center justify-center">图纸名称</div>
          </div>
          <div className="flex h-[21px] shrink-0">
            <div className="w-[20px] bg-[#fbd699] text-[#5a0a96] flex items-center justify-center"><Mono>1</Mono></div>
            <div className="flex-1 bg-[#0a7a28] border-2 border-[#808080] pl-[16px] flex items-center overflow-hidden whitespace-nowrap">五号楼基础平面图_t</div>
          </div>
          <div className="flex h-[18px] shrink-0 border-b border-[#cccccc]">
            <div className="w-[20px] bg-[#efefef] flex items-center justify-center"><Mono>2</Mono></div>
            <div className="flex-1 pl-[18px] flex items-center overflow-hidden whitespace-nowrap">五号楼一层平面图_t</div>
          </div>
          <div className="flex-1" />
          <div className="h-[16px] mb-[2px] bg-[#f0f0f0] flex items-center relative shrink-0">
            <span className="ml-[8px] w-0 h-0 border-y-[4px] border-r-[4px] border-y-transparent border-r-[#555]" />
            <span className="ml-[6px] w-[15px] h-[15px] bg-[#dcdcdc] border border-[#b4b4b4]" />
            <span className="ml-auto mr-[6px] w-0 h-0 border-y-[4px] border-l-[4px] border-y-transparent border-l-[#555]" />
          </div>
        </div>
      </div>
      <PanelTitle className="mt-[7px]">CAD图层显示</PanelTitle>
      <div className="flex-1 mt-[1px] mb-[2px] bg-white border border-[#8c8c94] pl-[11px]">
        {['已提取的CAD图层', 'CAD原始图层'].map((t, i) => (
          <div key={t} className="h-[14px] flex items-center leading-none whitespace-nowrap">
            <span className={`w-0 h-0 border-y-[4px] border-l-[5px] border-y-transparent ${i === 0 ? 'border-l-[#38b8f0]' : 'border-l-[#c4c4c4]'}`} />
            <span className="ml-[5px] w-[4px] border-t border-dotted border-[#777]" />
            <svg viewBox="0 0 12 12" width="12" height="12" className="block ml-[1px] mr-[3px]"><rect x=".5" y=".5" width="11" height="11" fill="#d8e6f4" stroke="#8a9ab0" /><rect x="2.500" y="2.500" width="7" height="7" fill="#1878b8" /></svg>
            {t}
          </div>
        ))}
      </div>
    </div>
  )
}

function BottomTools() {
  const act = 'flex items-center h-[22px] border border-[#3f9be6] bg-[#dcedfb] shrink-0'
  return (
    <div className="h-[31px] flex items-center shrink-0">
      <div className="h-[27px] w-[475px] ml-[1px] flex items-center bg-linear-to-b from-[#fdfdfd] to-[#eeeeee]">
        <Grip className="ml-[4px]" />
        <Tool icon={Ic.ortho} label="正交" className="ml-[5px]" />
        <div className={`${act} w-[75px] ml-[4px] pl-[3px]`}><Tool icon={Ic.snap} label="对象捕捉" /></div>
        <div className={`${act} w-[74px] pl-[4px]`}><Tool icon={Ic.dyn} label="动态输入" /></div>
        <Grip className="ml-[6px]" />
        <Tool icon={Ic.cross} label="交点" className="ml-[7px]" />
        <Tool icon={Ic.perp} label="垂点" className="ml-[8px]" />
        <Tool icon={Ic.mid} label="中点" className="ml-[9px]" />
        <div className={`${act} w-[50px] ml-[3px] pl-[3px]`}><Tool icon={Ic.vertex} label="顶点" /></div>
        <Tool icon={Ic.coord} label="坐标" className="ml-[5px]" />
      </div>
    </div>
  )
}

const props = [
  ['名称', 'FBZJ-2', 'm', false],
  ['类别', '面筋', '', true],
  ['钢筋信息', 'ф10@200', 'm', true],
  ['钢筋锚固', '(37)', 'm', false],
  ['钢筋搭接', '(52)', 'm', false],
  ['归类名称', '(FBZJ-2)', 'm', true],
  ['汇总信息', '筏板主筋', '', true],
  ['计算设置', '按默认计算设', '', false],
  ['节点设置', '按默认节点设', '', false],
  ['搭接设置', '按默认搭接设', '', false],
  ['长度调整', '', '', true],
  ['备注', '', '', true],
]

const Num = ({ n, on }) => (
  <div className={`w-[21px] shrink-0 flex items-center justify-center border-r border-[#c4c4c4] ${on ? 'bg-[#fbd699] text-[#5a0a96]' : 'bg-[#f0f0f0]'}`}><Mono className="text-[11px]">{n}</Mono></div>
)

const Tree = ({ last }) => (
  <svg viewBox="0 0 24 19" width="24" height="19" className="block shrink-0">
    <path d={last ? 'M7 0V9.500H22' : 'M7 0V19M7 9.500H22'} stroke="#aaaaaa" fill="none" />
  </svg>
)

function PropertyPanel() {
  return (
    <div className="w-[262px] ml-[2px] shrink-0 flex flex-col relative">
      <div className="h-[16px] border-t border-[#8c8c94] bg-[#f0f0f0] flex items-center leading-none text-[13px] shrink-0 pb-[1px]">
        <span>属性编辑器</span>
        <span className="ml-auto mr-[15px]"><Pin /></span>
        <span className="mr-[5px]"><Cross /></span>
      </div>
      <div className="flex-1 bg-white border border-[#8c8c94] mb-[2px] flex flex-col ml-0 pl-[1px]">
        <div className="h-[24px] flex shrink-0 bg-linear-to-b from-[#ffffff] to-[#eeeeee]">
          <div className="w-[21px] border-r border-[#c4c4c4] bg-[#f0f0f0]" />
          <div className="w-[120px] flex items-center pl-[35px] text-[12px] pt-[2px] border-r border-[#d8d8d8]">属性</div>
          <div className="w-[87px] flex flex-col justify-end"><span className="h-[6px] bg-[#f3bf66]" /></div>
        </div>
        {props.map(([k, v, f, chk], i) => (
          <div key={k} className="h-[19px] flex border-b border-[#c4c4c4] shrink-0 leading-none">
            <Num n={i + 1} on={i === 0} />
            <div className={`w-[120px] shrink-0 pl-[20px] pt-[2px] flex items-center border-r border-[#c4c4c4] ${i === 0 ? 'bg-[#318fe8] text-white' : ''} ${i === 2 ? 'text-[#0a0ae8]' : ''}`}>
              {k}{i === 10 && <Mono>(mm)</Mono>}
            </div>
            <div className={`w-[87px] shrink-0 pl-[2px] flex items-center border-r border-[#c4c4c4] overflow-hidden whitespace-nowrap ${i === 0 ? 'bg-[#dcedfc]' : ''}`}>
              {f === 'm' ? <Mono>{v}</Mono> : v}
            </div>
            <div className="w-[31px] shrink-0 flex items-center justify-center">
              {chk && <span className="w-[12px] h-[12px] border border-[#9a9a9a] bg-[#f4f4f4] ml-[-1px]" />}
            </div>
          </div>
        ))}
        <div className="h-[19px] flex border-b border-[#c4c4c4] shrink-0 leading-none">
          <Num n={13} />
          <div className="w-[120px] shrink-0 flex items-center border-r border-[#c4c4c4] text-[#8c8c8c]">
            <span className="ml-[2px] w-[11px] h-[11px] border border-[#a4a4a4] bg-[#eeeeee] flex items-center justify-center"><span className="w-[7px] h-px bg-black" /></span>
            <span className="ml-[5px] mt-[2px]">显示样式</span>
          </div>
          <div className="w-[87px] shrink-0 border-r border-[#c4c4c4]" />
        </div>
        {[['边框颜色', 14], ['填充颜色', 15], ['不透明度', 16]].map(([k, n]) => (
          <div key={k} className="h-[19px] flex border-b border-[#c4c4c4] shrink-0 leading-none">
            <Num n={n} />
            <div className="w-[120px] shrink-0 flex items-center border-r border-[#c4c4c4]">
              <Tree last={n === 16} />
              <span className="ml-[6px] mt-[2px]">{k}</span>
            </div>
            <div className="w-[87px] shrink-0 flex items-center border-r border-[#c4c4c4] pl-[4px]">
              {n === 16 ? <Mono className="ml-[-2px]">100</Mono> : <span className="w-[77px] h-[14px] bg-[#ff00e6] border border-black" />}
            </div>
          </div>
        ))}
      </div>
      <ImeBar />
    </div>
  )
}

function ImeBar() {
  return (
    <div className="absolute top-[11px] left-[78px] w-[184px] h-[23px] flex items-center">
      <div className="absolute left-[6px] right-0 top-0 bottom-[5px] bg-[#f3f6fa]" />
      <span className="relative w-[27px] h-[27px] mt-[4px] bg-[#f04e1c] rounded-[4px] -rotate-12 flex items-center justify-center text-white font-bold text-[23px] leading-none shrink-0">S</span>
      <span className="relative ml-[6px] text-[16px] font-bold text-[#1a84d8] leading-none">中</span>
      <svg viewBox="0 0 16 16" width="15" height="15" className="relative block ml-[6px]"><path d="M10 1c2 6-2 11-8 11 3 3 12 3 12-4 0-3-2-6-4-7z" fill="#1a84d8" /></svg>
      <span className="relative ml-[8px] text-[15px] font-bold text-[#1a84d8] leading-none">°,</span>
      <svg viewBox="0 0 16 16" width="16" height="15" className="relative block ml-[10px]"><rect x="1" y="2" width="14" height="12" rx="2" fill="#1a84d8" /><path d="M3 5h10M3 8h10M5 11h6" stroke="#fff" strokeDasharray="1.500 1" /></svg>
      <svg viewBox="0 0 16 16" width="15" height="15" className="relative block ml-[7px]"><circle cx="7" cy="4" r="3" fill="#a9b4c0" /><path d="M1 15c0-5 3-7 6-7s4 1 5 2v5z" fill="#a9b4c0" /><rect x="9" y="10" width="6" height="5" fill="#fff" stroke="#a9b4c0" /></svg>
      <svg viewBox="0 0 16 16" width="15" height="15" className="relative block ml-[6px]"><path d="M5 1L1 4l2 3 1-1v9h8V6l1 1 2-3-4-3-3 1z" fill="#1a84d8" /></svg>
      <svg viewBox="0 0 16 16" width="15" height="15" className="relative block ml-[8px]"><path d="M15 4l-3 3-3-1-1-3 3-3c-3-1-6 1-5 5L1 11c-1 3 1 5 4 4l6-5c3 1 6-2 4-6z" fill="#1a84d8" /></svg>
    </div>
  )
}

function UploadWidget() {
  return (
    <div className="absolute top-0 right-0 h-[28px] w-[210px] flex items-start">
      <div className="relative mt-[2px] h-[25px] w-[104px] flex rounded-[5px] border border-[#5aa6f0] bg-[#e4effb] overflow-hidden">
        <div className="w-[29px] bg-[#3f96ef] flex items-center justify-center">
          <svg viewBox="0 0 18 16" width="20" height="18" className="block"><circle cx="9" cy="5" r="3.200" stroke="#fff" strokeWidth="1.800" fill="none" /><circle cx="5" cy="11" r="3.200" stroke="#fff" strokeWidth="1.800" fill="none" /><circle cx="13" cy="11" r="3.200" stroke="#fff" strokeWidth="1.800" fill="none" /></svg>
        </div>
        <span className="flex-1 flex items-center justify-center text-[#9fb8d8] text-[12px]">拖拽上传</span>
      </div>
      <span className="mt-[8px]"><Caret tight /></span>
      <svg viewBox="0 0 16 18" width="14" height="17" className="block ml-[4px]"><path d="M8 1c-3 0-5 2-5 6v4l-2 3h14l-2-3V7c0-4-2-6-5-6zM6 15c0 2 4 2 4 0z" fill="#1a6fd8" /></svg>
      <svg viewBox="0 0 16 18" width="16" height="17" className="block ml-[7px]"><path d="M1 2h14v11H8l-3 3v-3H1z" fill="#fff" stroke="#3f86d8" /><path d="M5 7h6" stroke="#3f86d8" strokeDasharray="1 1" /></svg>
      <span className="ml-[6px] mt-[3px] leading-[14px] whitespace-nowrap">我要建议</span>
    </div>
  )
}

function StatusBar() {
  const cell = 'h-full flex items-center border border-[#d8d8d8] bg-[#f4f4f4] shrink-0 leading-none'
  return (
    <div className="h-[18px] flex shrink-0 gap-[2px] bg-[#f0f0f0]">
      <div className={`${cell} w-[105px] pl-[6px]`}><Mono>Y=40480</Mono></div>
      <div className={`${cell} w-[78px] pl-[2px]`}>层高<Mono>:1.95m</Mono></div>
      <div className={`${cell} w-[98px] pl-[2px]`}>底标高<Mono>:-2m</Mono></div>
      <div className={`${cell} w-[47px] pl-[1px]`}><Mono>0</Mono></div>
      <div className={`${cell} flex-1 pl-[4px]`}>
        按鼠标左键指定第一个角点，或拾取构件图元
        <Mono className="ml-auto mr-[12px]">202.6 FPS</Mono>
      </div>
    </div>
  )
}

export default function App() {
  return (
    <div className="w-[1876px] h-[1012px] bg-[#f0f0f0] flex flex-col overflow-hidden relative text-[12px] text-black font-['Liberation_Sans','Noto_Sans_CJK_SC',sans-serif]">
      <MenuBar />
      <ToolRow1 />
      <div className="h-[4px] shrink-0" />
      <div className="h-[940px] flex shrink-0 min-h-0">
        <Nav />
        <DrawingPanel />
        <div className="w-[1318px] ml-[4px] shrink-0 flex flex-col">
          <ToolRow2 />
          <ToolRow3 />
          <ToolRow4 />
          <div className="h-[825px] ml-px shrink-0 overflow-hidden"><Drawing /></div>
          <BottomTools />
        </div>
        <PropertyPanel />
      </div>
      <StatusBar />
      <UploadWidget />
    </div>
  )
}
